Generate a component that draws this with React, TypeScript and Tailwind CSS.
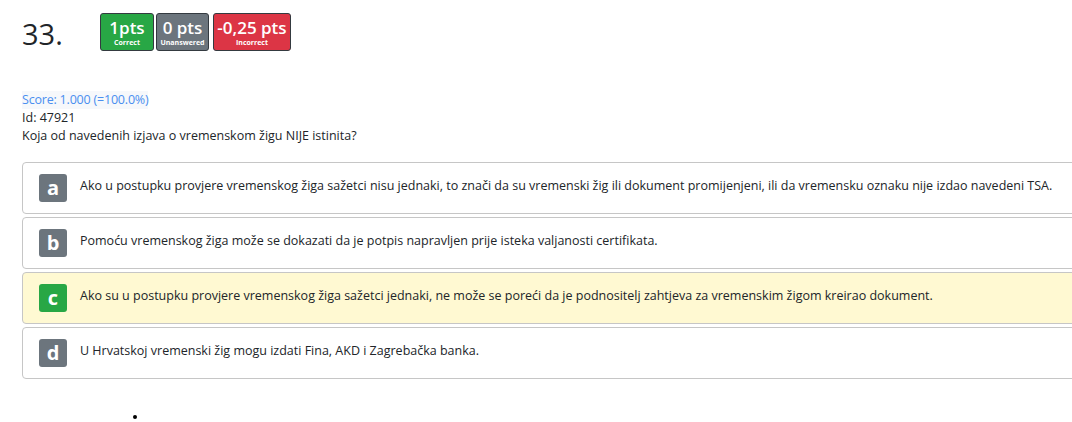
import React from "react";

const answers = [
  {
    letter: "a",
    text: "Ako u postupku provjere vremenskog žiga sažetci nisu jednaki, to znači da su vremenski žig ili dokument promijenjeni, ili da vremensku oznaku nije izdao navedeni TSA.",
    correct: false,
  },
  {
    letter: "b",
    text: "Pomoću vremenskog žiga može se dokazati da je potpis napravljen prije isteka valjanosti certifikata.",
    correct: false,
  },
  {
    letter: "c",
    text: "Ako su u postupku provjere vremenskog žiga sažetci jednaki, ne može se poreći da je podnositelj zahtjeva za vremenskim žigom kreirao dokument.",
    correct: true,
  },
  {
    letter: "d",
    text: "U Hrvatskoj vremenski žig mogu izdati Fina, AKD i Zagrebačka banka.",
    correct: false,
  },
];

const Badge: React.FC<{ value: string; label: string; color: string; width: string }> = ({
  value,
  label,
  color,
  width,
}) => (
  <div
    className={`${color} ${width} h-[38px] rounded-[3px] border border-[#343a40] text-white flex flex-col items-center justify-center leading-none`}
  >
    <span className="text-[17px] font-semibold">{value}</span>
    <span className="text-[7px] font-bold mt-[3px]">{label}</span>
  </div>
);

export default function App() {
  return (
    <div
      className="w-[1072px] h-[422px] bg-white overflow-hidden relative text-[#212529]"
      style={{ fontFamily: '"Open Sans", "Noto Sans", sans-serif' }}
    >
      <div className="flex items-start pl-[22px] pt-[13px]">
        <div className="text-[29px] leading-none mt-[6px] w-[78px] text-[#212529]">33.</div>
        <div className="flex gap-[2px]">
          <Badge value="1pts" label="Correct" color="bg-[#28a745]" width="w-[54px]" />
          <Badge value="0 pts" label="Unanswered" color="bg-[#6c757d]" width="w-[53px]" />
          <div className="ml-[2px]">
            <Badge value="-0,25 pts" label="Incorrect" color="bg-[#dc3545]" width="w-[78px]" />
          </div>
        </div>
      </div>

      <div className="pl-[22px] mt-[40px] text-[12.5px] leading-[18px]">
        <div className="text-[#4a8ff0] bg-[#f6f8fb] inline-block tracking-[-0.2px]">Score: 1.000 (=100.0%)</div>
        <div>Id: 47921</div>
        <div>Koja od navedenih izjava o vremenskom žigu NIJE istinita?</div>
      </div>

      <div className="ml-[22px] mt-[17px] w-[1070px] flex flex-col gap-[3px]">
        {answers.map((a) => (
          <div
            key={a.letter}
            className={`h-[52px] rounded-[4px] border border-[#c6c6c6] flex items-start pt-[11px] pl-[16px] ${
              a.correct ? "bg-[#fff9d2]" : "bg-white"
            }`}
          >
            <div
              className={`w-[28px] h-[28px] rounded-[3px] flex items-center justify-center text-white text-[20px] font-bold leading-none ${
                a.correct ? "bg-[#28a745]" : "bg-[#6c757d]"
              }`}
            >
              {a.letter}
            </div>
            <div className="ml-[13px] mt-[3px] text-[12.5px] leading-[18px] text-[#212529]">
              {a.text}
            </div>
          </div>
        ))}
      </div>

      <div className="absolute left-[133px] top-[415px] w-[4px] h-[4px] rounded-full bg-black" />
    </div>
  );
}
